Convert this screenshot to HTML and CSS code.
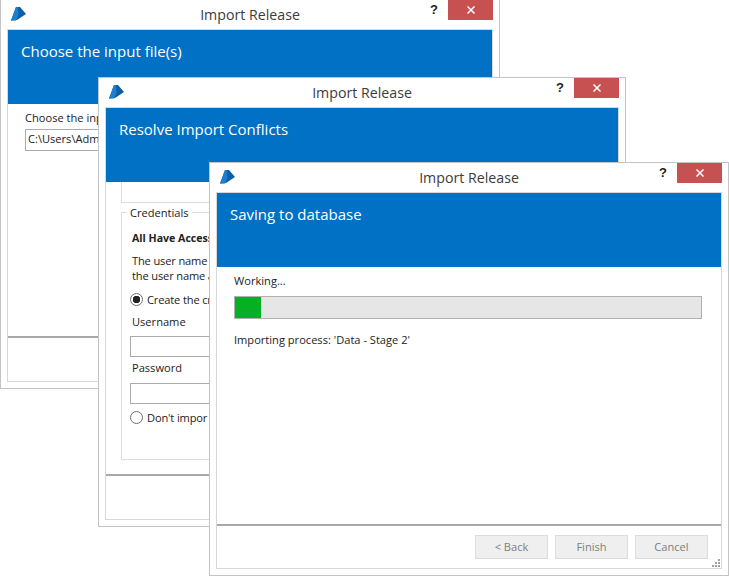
FILE: index.html
```html
<!DOCTYPE html>
<html lang="en">
  <head>
    <meta charset="UTF-8" />
    <title>Import Release</title>
    <link rel="stylesheet" href="styles.css">
  </head>
  <body>
    <section class="win win-first">
      <header class="titlebar">
        <svg class="logo" viewBox="0 0 15 14"><path class="logo-dark" d="M5 0h4l6 7-9 6-6 .5z" /><path class="logo-light" d="M5 0h2l.5 8-2.500 5.500h-5z" /></svg>
        <span class="title">Import Release</span>
        <div class="actions">
          <span class="help">?</span>
          <span class="close"><svg class="close-x" viewBox="0 0 8 8"><path d="M.5.5l7 7M7.500.5l-7 7" /></svg></span>
        </div>
      </header>
      <div class="panel">
        <div class="banner">Choose the input file(s)</div>
        <div class="body body-first">
          <div class="line">Choose the inp</div>
          <div class="field field-path">C:\Users\Adm</div>
        </div>
        <div class="footer footer-short"></div>
      </div>
    </section>

    <section class="win win-second">
      <header class="titlebar">
        <svg class="logo" viewBox="0 0 15 14"><path class="logo-dark" d="M5 0h4l6 7-9 6-6 .5z" /><path class="logo-light" d="M5 0h2l.5 8-2.500 5.500h-5z" /></svg>
        <span class="title">Import Release</span>
        <div class="actions">
          <span class="help">?</span>
          <span class="close"><svg class="close-x" viewBox="0 0 8 8"><path d="M.5.5l7 7M7.500.5l-7 7" /></svg></span>
        </div>
      </header>
      <div class="panel">
        <div class="banner">Resolve Import Conflicts</div>
        <div class="body body-second">
          <div class="stub"></div>
          <fieldset class="group">
            <legend>Credentials</legend>
            <div class="group-head">All Have Access</div>
            <div class="note">The user name a<br>the user name a</div>
            <div class="radio-row radio-create"><span class="radio radio-on"></span>Create the cr</div>
            <div class="line field-label">Username</div>
            <div class="field field-wide"></div>
            <div class="line field-label field-label-next">Password</div>
            <div class="field field-wide field-wide-next"></div>
            <div class="radio-row radio-skip"><span class="radio"></span>Don't impor</div>
          </fieldset>
        </div>
        <div class="footer footer-short"></div>
      </div>
    </section>

    <section class="win win-third">
      <header class="titlebar">
        <svg class="logo" viewBox="0 0 15 14"><path class="logo-dark" d="M5 0h4l6 7-9 6-6 .5z" /><path class="logo-light" d="M5 0h2l.5 8-2.500 5.500h-5z" /></svg>
        <span class="title">Import Release</span>
        <div class="actions">
          <span class="help">?</span>
          <span class="close"><svg class="close-x" viewBox="0 0 8 8"><path d="M.5.5l7 7M7.500.5l-7 7" /></svg></span>
        </div>
      </header>
      <div class="panel">
        <div class="banner">Saving to database</div>
        <div class="body body-third">
          <div class="line">Working...</div>
          <div class="progress"><div class="progress-fill" style="width: 26px;"></div></div>
          <div class="line">Importing process: 'Data - Stage 2'</div>
        </div>
        <div class="footer footer-third">
          <button class="btn" disabled>&lt; Back</button>
          <button class="btn" disabled>Finish</button>
          <button class="btn" disabled>Cancel</button>
          <svg class="grip" viewBox="0 0 8 8"><path d="M6 0h2v2H6zM3 3h2v2H3zM6 3h2v2H6zM0 6h2v2H0zM3 6h2v2H3zM6 6h2v2H6z" /></svg>
        </div>
      </div>
    </section>
  </body>
</html>
```

FILE: styles.css
```css
html,
body {
  height: 100%;
}

body {
  margin: 0;
  background: #fff;
  overflow: hidden;
  font: 11.1px "Open Sans", sans-serif;
  color: #222;
}

/* the three dialogs sit on the desktop, stacked */
.win {
  position: absolute;
  box-sizing: border-box;
  display: flex;
  flex-direction: column;
  background: #fff;
  border: 1px solid #c4c4c4;
  padding: 0 6px 6px;
}

.win-first {
  left: 0;
  top: -1px;
  width: 500px;
  height: 390px;
}

.win-second {
  left: 98px;
  top: 77px;
  width: 528px;
  height: 450px;
}

.win-third {
  left: 209px;
  top: 162px;
  width: 520px;
  height: 414px;
}

.titlebar {
  flex: none;
  height: 29px;
  display: grid;
  grid-template-columns: 1fr auto 1fr;
  align-items: start;
}

.logo {
  width: 15px;
  height: 14px;
  margin: 7px 0 0 4px;
}

.logo-dark {
  fill: #0d5ea6;
}

.logo-light {
  fill: #1c80cc;
}

.title {
  font-size: 14.2px;
  line-height: 30px;
  color: #3c3c3c;
}

.actions {
  justify-self: end;
  display: flex;
  align-items: flex-start;
}

.help {
  width: 18px;
  margin-top: 1px;
  font: bold 13px/18px "Liberation Sans", sans-serif;
  color: #222;
}

.close {
  display: flex;
  align-items: center;
  justify-content: center;
  width: 45px;
  height: 20px;
  background: #c75050;
}

.close-x {
  width: 8px;
  height: 8px;
  fill: none;
  stroke: #fff;
  stroke-width: 1.5;
}

.panel {
  flex: 1;
  min-height: 0;
  display: flex;
  flex-direction: column;
  border: 1px solid #d8d8d8;
}

.banner {
  flex: none;
  height: 74px;
  box-sizing: border-box;
  padding: 10px 13px;
  background: #0071c5;
  color: #fff;
  font-size: 15px;
  line-height: 22px;
}

.body {
  flex: 1;
  min-height: 0;
  overflow: hidden;
}

.line {
  line-height: 15px;
}

.field {
  box-sizing: border-box;
  border: 1px solid #ababab;
  background: #fff;
}

.body-first {
  padding: 6px 17px;
}

.field-path {
  width: 300px;
  height: 22px;
  margin-top: 4px;
  padding-left: 2px;
  line-height: 18px;
}

.footer {
  flex: none;
  box-sizing: border-box;
  border-top: 2px solid #a8a8a8;
}

.footer-short {
  height: 45px;
}

.body-second {
  padding: 0 15px;
}

.stub {
  height: 20px;
  border: solid #dcdcdc;
  border-width: 0 1px 1px;
}

.group {
  box-sizing: border-box;
  height: 254px;
  margin: 3px 0 0;
  padding: 7px 8px 0;
  border: 1px solid #dcdcdc;
}

.group legend {
  margin-left: -3px;
  padding: 0 3px;
  line-height: 13px;
}

.group-head {
  margin: 5px 0 0 2px;
  font-weight: bold;
  font-size: 10.6px;
  line-height: 15px;
}

.note {
  margin: 7px 0 0 2px;
  letter-spacing: -0.15px;
  line-height: 15px;
}

.radio-row {
  display: flex;
  align-items: center;
  gap: 4px;
  letter-spacing: -0.15px;
  line-height: 15px;
}

.radio-create {
  margin-top: 9px;
}

.radio-skip {
  margin-top: 6px;
}

.radio {
  box-sizing: border-box;
  width: 13px;
  height: 13px;
  border: 1px solid #6e6e6e;
  border-radius: 50%;
  background: #fff;
}

.radio-on {
  background: radial-gradient(circle, #222 0 3.5px, #fff 4px);
}

.field-label {
  margin: 7px 0 0 2px;
}

.field-label-next {
  margin-top: 3px;
}

.field-wide {
  width: 300px;
  height: 21px;
  margin-top: 7px;
}

.field-wide-next {
  margin-top: 8px;
}

.body-third {
  padding: 6px 17px;
}

.progress {
  box-sizing: border-box;
  width: 468px;
  height: 23px;
  margin: 8px 0 13px;
  border: 1px solid #b0b0b0;
  background: #e6e6e6;
}

.progress-fill {
  height: 100%;
  background: #06b025;
}

.footer-third {
  height: 44px;
  position: relative;
  display: flex;
  justify-content: flex-end;
  gap: 7px;
  padding: 9px 13px 0 0;
}

.btn {
  box-sizing: border-box;
  width: 73px;
  height: 24px;
  padding: 0 0 2px;
  border: 1px solid #dcdcdc;
  background: #efefef;
  color: #7e7e7e;
  font: 11.1px "Open Sans", sans-serif;
}

/* resize handle in the corner */
.grip {
  position: absolute;
  right: 1px;
  bottom: 1px;
  width: 8px;
  height: 8px;
  fill: #a0a0a0;
}
```
